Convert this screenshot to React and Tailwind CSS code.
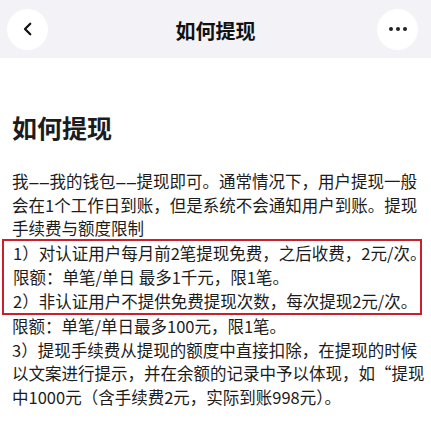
import React from 'react';

const font = { fontFamily: '"Noto Sans CJK SC", "Noto Sans", sans-serif' };

function BackIcon() {
    return (
        <svg width="18" height="18" viewBox="0 0 24 24" fill="none" stroke="#111" strokeWidth="3" strokeLinecap="round" strokeLinejoin="round">
            <path d="M15 5l-7 7 7 7" />
        </svg>
    );
}

// two short dashes, as drawn in the source text
function Dashes() {
    return (
        <span className="font-['Liberation_Sans',sans-serif]">
            <span className="inline-block w-[10.5px] text-center">–</span>
            <span className="inline-block w-[10.5px] text-center">–</span>
        </span>
    );
}

export default function App() {
    const boxed = [
        '1）对认证用户每月前2笔提现免费，之后收费，2元/次。',
        '限额：单笔/单日 最多1千元，限1笔。',
        '2）非认证用户不提供免费提现次数，每次提现2元/次。',
    ];
    const rest = [
        '限额：单笔/单日最多100元，限1笔。',
        '3）提现手续费从提现的额度中直接扣除，在提现的时候',
        '以文案进行提示，并在余额的记录中予以体现，如“提现',
        '中1000元（含手续费2元，实际到账998元）。',
    ];

    return (
        <div className="w-[431px] h-[423px] overflow-hidden bg-white" style={font}>
            {/* Header */}
            <div className="h-[58px] bg-[#f2f2f7] flex items-center justify-between px-[7px] relative">
                <button className="w-[41px] h-[41px] rounded-full bg-white flex items-center justify-center">
                    <BackIcon />
                </button>
                <h1 className="absolute left-0 right-0 text-center text-[20px] font-bold text-[#111] leading-none pointer-events-none mt-[4px]">
                    如何提现
                </h1>
                <button className="w-[41px] h-[41px] rounded-full bg-white flex items-center justify-center gap-[3px] mr-[6px]">
                    <span className="w-[4px] h-[4px] rounded-full bg-[#222]" />
                    <span className="w-[4px] h-[4px] rounded-full bg-[#222]" />
                    <span className="w-[4px] h-[4px] rounded-full bg-[#222]" />
                </button>
            </div>

            {/* Content */}
            <div className="pt-[51px] text-[#1c1c1c]">
                <h2 className="px-3 text-[25px] font-bold leading-[36px]">如何提现</h2>

                <div className="mt-[25px] text-[16.5px] whitespace-nowrap">
                    <div className="px-3 leading-[23px]">
                        <div>
                            我<Dashes />我的钱包<Dashes />提现即可。通常情况下，用户提现一般
                        </div>
                        <div>会在1个工作日到账，但是系统不会通知用户到账。提现</div>
                        <div>手续费与额度限制</div>
                    </div>
                    <div className="mx-[2px] w-[420px] -mt-[1px] border-2 border-[#cc1f2d] px-[9px] leading-[24px]">
                        {boxed.map((l) => (
                            <div key={l}>{l}</div>
                        ))}
                    </div>
                    <div className="px-3 leading-[23.5px]">
                        {rest.map((l) => (
                            <div key={l}>{l}</div>
                        ))}
                    </div>
                </div>
            </div>
        </div>
    );
}
